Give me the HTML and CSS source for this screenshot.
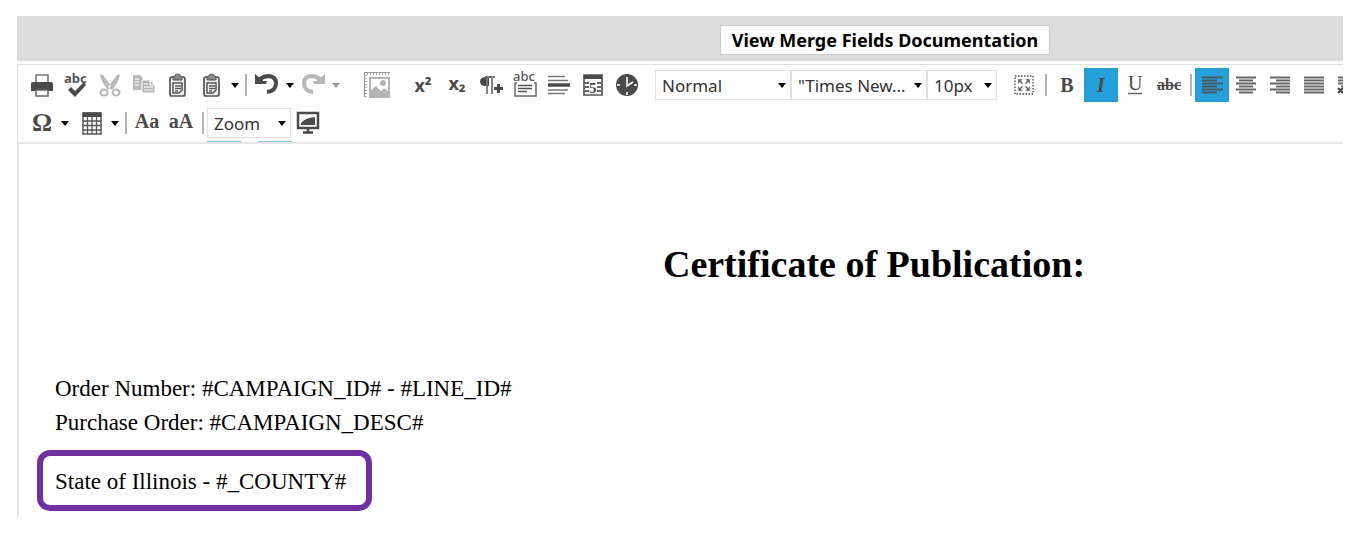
FILE: index.html
```html
<!DOCTYPE html>
<html lang="en">
<head>
<meta charset="utf-8">
<title>Template Editor</title>
<link rel="stylesheet" href="styles.css">
</head>
<body>
<main class="app">
  <header class="topbar"><button class="docs" type="button">View Merge Fields Documentation</button></header>
  <section class="editor">
    <div class="toolbar" role="toolbar" aria-label="Formatting">
      <div class="row">
        <button class="tool" aria-label="Print"><svg viewBox="0 0 24 24"><path d="M6 10V2h12v8" fill="none" stroke="#777" stroke-width="1.6"/><path d="M3 9h18q2 0 2 2v7H1v-7q0-2 2-2z" fill="#4a4a4a"/><path d="M6 17h12v6H6z" fill="#fff" stroke="#666" stroke-width="1.5"/></svg></button>
        <button class="tool" aria-label="Spell check"><svg viewBox="0 0 24 24"><text class="abc" x="0" y="10">abc</text><path d="M4 17l3-3 4 4 9-9 2 3-11 12z" fill="#4a4a4a"/></svg></button>
        <button class="tool" aria-label="Cut" disabled><svg viewBox="0 0 24 24"><path d="M2 2q2-1 3 0l8 11-3 4Q4 10 2 2zM22 2q-2-1-3 0l-9 12 4 3Q20 10 22 2z" fill="#b8b8b8"/><ellipse cx="6" cy="19.500" rx="3.500" ry="3" fill="none" stroke="#b8b8b8" stroke-width="2"/><ellipse cx="18" cy="19.500" rx="3.500" ry="3" fill="none" stroke="#b8b8b8" stroke-width="2"/></svg></button>
        <button class="tool" aria-label="Copy" disabled><svg viewBox="0 0 24 24"><path d="M1 2h7l3 3v12H1z" fill="#bbb"/><path d="M3 6h4M3 9h4M3 12h4" stroke="#fff"/><path d="M10 7h8l5 5v8H10z" fill="#b5b5b5" stroke="#fff"/><path d="M18 7v5h5M12 11h4M12 14h9M12 17h9" fill="none" stroke="#fff"/></svg></button>
        <button class="tool" aria-label="Paste"><svg viewBox="0 0 24 24"><rect x="4" y="4" width="15" height="19" rx="2" fill="#eee" stroke="#555" stroke-width="1.7"/><path d="M7 7V4q0-1 2-1 0-2 2.500-2T14 3q2 0 2 1v3z" fill="#888" stroke="#555"/><path d="M7 10h9v7l-3 3H7z" fill="#fff" stroke="#555" stroke-width="1.500"/><path d="M9 13h6M9 15.500h6M9 18h3" stroke="#555" stroke-width="1.300"/></svg></button>
        <button class="tool" aria-label="Paste options"><svg viewBox="0 0 24 24"><rect x="4" y="4" width="15" height="19" rx="2" fill="#eee" stroke="#555" stroke-width="1.7"/><path d="M7 7V4q0-1 2-1 0-2 2.500-2T14 3q2 0 2 1v3z" fill="#888" stroke="#555"/><path d="M7 10h9v7l-3 3H7z" fill="#fff" stroke="#555" stroke-width="1.500"/><path d="M9 13h6M9 15.500h6M9 18h3" stroke="#555" stroke-width="1.300"/></svg></button>
        <button class="more" aria-label="More paste options"></button>
        <span class="sep"></span>
        <button class="tool" aria-label="Undo"><svg viewBox="0 0 24 24"><path d="M5 6q4-3 9-3 7 1 7 7 0 8-9 9" fill="none" stroke="#4a4a4a" stroke-width="4"/><path d="M0 1l5 4 2-1 1 4 4 0-1 3-11 0z" fill="#4a4a4a"/></svg></button>
        <button class="more" aria-label="Undo history"></button>
        <button class="tool" aria-label="Redo" disabled><svg viewBox="0 0 24 24"><path d="M19 6q-4-3-9-3-7 1-7 7 0 8 9 9" fill="none" stroke="#b8b8b8" stroke-width="4"/><path d="M24 1l-5 4-2-1-1 4-4 0 1 3 11 0z" fill="#b8b8b8"/></svg></button>
        <button class="more off" aria-label="Redo history" disabled></button>
        <button class="tool image" aria-label="Insert image" disabled><svg class="big" viewBox="0 0 28 28"><path d="M3 26V3h24" fill="none" stroke="#aaa" stroke-dasharray="1 2" stroke-width="2"/><path d="M1.500 26V1.500H27" fill="none" stroke="#999"/><path d="M7 7h19v19H7z" fill="#fff" stroke="#b5b5b5" stroke-width="2"/><circle cx="20" cy="12" r="3" fill="#b5b5b5"/><path d="M7 26v-6l6-5 5 5 3-3 5 4v5z" fill="#b5b5b5"/></svg></button>
        <button class="tool script" aria-label="Superscript"><span>x²</span></button>
        <button class="tool script sub" aria-label="Subscript"><span>x₂</span></button>
        <button class="tool" aria-label="New paragraph"><svg viewBox="0 0 24 24"><path d="M10 4H7Q1 4 1 8.500T7 13h3z" fill="#4a4a4a"/><path d="M8 4v17M13 4v17M6 4h10" fill="none" stroke="#777" stroke-width="1.800"/><path d="M19.500 11v9M15 15.500h9" stroke="#4a4a4a" stroke-width="3"/></svg></button>
        <button class="tool" aria-label="Group box"><svg viewBox="0 0 24 24"><text class="abc thin" x="0" y="8">abc</text><path d="M4 10H2v13h21V10h-2" fill="none" stroke="#666" stroke-width="1.500"/><path d="M5 12.500h14M5 15.500h14M5 18.500h9" stroke="#555" stroke-width="1.500"/></svg></button>
        <button class="tool" aria-label="Horizontal rule"><svg viewBox="0 0 24 24"><path d="M1 3.500h17M1 7.500h20M1 17h20M1 20.500h17" stroke="#777" stroke-width="1.700"/><path d="M1 12h22" stroke="#4a4a4a" stroke-width="3.500"/></svg></button>
        <button class="tool" aria-label="Insert date"><svg viewBox="0 0 24 24"><path d="M3 2h18v20H3z" fill="#fff" stroke="#555" stroke-width="1.700"/><path d="M3 2h18v4H3z" fill="#4a4a4a"/><path d="M4 10h4M16 10h4M4 14h4M16 14h4M4 18h4M16 18h4" stroke="#666" stroke-width="2"/><text class="five" x="8" y="20">5</text></svg></button>
        <button class="tool" aria-label="Insert time"><svg viewBox="0 0 24 24"><circle cx="12" cy="12" r="11" fill="#4a4a4a"/><path d="M12 4v9l6-4M2 12h3M19 12h3M12 19v3" fill="none" stroke="#fff" stroke-width="1.600"/></svg></button>
        <label class="pick style"><select aria-label="Paragraph style"><option>Normal</option></select></label>
        <label class="pick font"><select aria-label="Font name"><option>"Times New...</option></select></label>
        <label class="pick size"><select aria-label="Font size"><option>10px</option></select></label>
        <button class="tool full" aria-label="Full screen"><svg viewBox="0 0 24 24"><path d="M3 3h18v18H3z" fill="none" stroke="#444" stroke-width="1.300" stroke-dasharray="1.500 1.500"/><path d="M6 11V6h5zM13 6h5v5zM6 13v5h5zM18 13v5h-5z" fill="#888"/><path d="M7 7l3.500 3.500M17 7l-3.500 3.500M7 17l3.500-3.500M17 17l-3.500-3.500" stroke="#666" stroke-width="1.500"/></svg></button>
        <span class="sep"></span>
        <button class="tool serif" aria-label="Bold">B</button>
        <button class="tool serif on" aria-label="Italic" aria-pressed="true"><i>I</i></button>
        <button class="tool serif" aria-label="Underline"><svg viewBox="0 0 24 24"><text class="u" x="5" y="17">U</text><path d="M5 20.500h14" stroke="#666" stroke-width="1.500"/></svg></button>
        <button class="tool serif strike" aria-label="Strikethrough"><s>abc</s></button>
        <span class="sep"></span>
        <button class="tool on" aria-label="Align left" aria-pressed="true"><svg viewBox="0 0 24 24"><path d="M2 4.500h21M2 10.500h21M2 16.500h21M2 7.500h15M2 13.500h15M2 19.500h15" stroke="#4a5a64" stroke-width="1.800"/></svg></button>
        <button class="tool" aria-label="Align center"><svg viewBox="0 0 24 24"><path d="M2 4.500h20M2 10.500h20M2 16.500h20M5 7.500h14M5 13.500h14M5 19.500h14" stroke="#666" stroke-width="2"/></svg></button>
        <button class="tool" aria-label="Align right"><svg viewBox="0 0 24 24"><path d="M2 4.500h20M2 10.500h20M2 16.500h20M8 7.500h14M8 13.500h14M8 19.500h14" stroke="#666" stroke-width="2"/></svg></button>
        <button class="tool" aria-label="Justify"><svg viewBox="0 0 24 24"><path d="M2 4.500h20M2 7.500h20M2 10.500h20M2 13.500h20M2 16.500h20M2 19.500h20" stroke="#666" stroke-width="2"/></svg></button>
        <button class="tool" aria-label="Remove alignment"><svg viewBox="0 0 24 24"><path d="M2 4.500h20M2 7.500h20M2 10.500h20M5 13.500h17" stroke="#666" stroke-width="2"/><path d="M2 20l5-5M2 15l5 5" stroke="#444" stroke-width="2"/></svg></button>
      </div>
      <div class="row">
        <button class="tool serif omega" aria-label="Insert symbol">Ω</button>
        <button class="more" aria-label="More symbols"></button>
        <button class="tool table" aria-label="Insert table"><svg viewBox="0 0 24 24"><path d="M3 2h18v21H3z" fill="#fff" stroke="#555" stroke-width="1.500"/><path d="M2.500 1.500h19V6h-19z" fill="#4a4a4a"/><path d="M3 10h18M3 14.500h18M3 19h18M7.500 6v17M12 6v17M16.500 6v17" stroke="#555" stroke-width="1.300"/></svg></button>
        <button class="more" aria-label="Table options"></button>
        <span class="sep"></span>
        <button class="tool serif case" aria-label="Lower case">Aa</button>
        <button class="tool serif case" aria-label="Upper case">aA</button>
        <span class="sep"></span>
        <label class="pick zoom"><select aria-label="Zoom"><option>Zoom</option></select></label>
        <button class="tool" aria-label="Preview"><svg viewBox="0 0 24 24"><path d="M2 2h20v15H2z" fill="#fff" stroke="#4a4a4a" stroke-width="2.500"/><path d="M5 14v-2q4-5 14-6v8z" fill="#4a4a4a"/><path d="M12 18v3M7 21.500h10" stroke="#4a4a4a" stroke-width="2.500"/></svg></button>
      </div>
      <div class="clipped"><span></span><span></span></div>
    </div>
    <div class="canvas">
      <article class="page">
        <h1>Certificate of Publication:</h1>
        <p>Order Number: #CAMPAIGN_ID# - #LINE_ID#</p>
        <p>Purchase Order: #CAMPAIGN_DESC#</p>
        <p class="marked">State of Illinois - #_COUNTY#</p>
      </article>
    </div>
  </section>
</main>
</body>
</html>
```

FILE: styles.css
```css
* { box-sizing: border-box; }
body { margin: 0; background: #fff; font-family: "Noto Sans", sans-serif; }
.app { margin: 16px 12px 0 17px; }
.topbar { display: flex; justify-content: center; align-items: center; height: 45px; padding: 2px 0 0 410px; background: #dcdcdc; }
.docs { height: 30px; padding: 0 11px; border: 1px solid #ccc; background: #fff; color: #000; font: bold 18px/28px "Noto Sans", sans-serif; white-space: nowrap; }
.editor { margin-top: 3px; border-top: 1px solid #e0e0e0; }
.toolbar { overflow: hidden; padding: 3px 0 0 7px; border-left: 1px solid #e0e0e0; border-bottom: 2px solid #e8e8e8; }
.row { display: flex; align-items: center; height: 34px; }
.row + .row { margin-top: 4px; }
.tool { display: flex; flex: none; align-items: center; justify-content: center; width: 34px; height: 34px; padding: 0; border: 0; background: none; color: #4a4a4a; }
.tool svg { width: 24px; height: 24px; overflow: visible; }
.tool .big { width: 28px; height: 28px; }
.on { background: #26a0da; border: 1px solid #2a98cf; }
.more { flex: none; width: 12px; height: 34px; padding: 0; border: 0; background: none; }
.more::before { content: ""; display: block; width: 0; margin: 0 auto; border: 4px solid transparent; border-top: 5px solid #000; border-bottom: 0; }
.off::before { border-top-color: #999; }
.sep { flex: none; width: 2px; height: 22px; margin: 0 3px 0 4px; background: #b4b4b4; }
.image { margin: 0 12px 0 18px; }
.full { margin-left: 10px; }
.script { font: bold 18px "Noto Sans", sans-serif; }
.sub { padding-bottom: 4px; }
.serif { font: bold 20px "Liberation Serif", serif; }
.strike { font-size: 16px; }
.omega { font-size: 25px; }
.table { margin-left: 4px; }
.case { padding-bottom: 4px; }
.abc { font: bold 13px "Noto Sans", sans-serif; fill: #555; }
.abc.thin { font-weight: 500; }
.five { font: bold 15px "Liberation Serif", serif; fill: #4a4a4a; }
.u { font: 20px "Liberation Serif", serif; fill: #4a4a4a; }
.pick { position: relative; flex: none; height: 30px; }
.pick::after { content: ""; position: absolute; top: 13px; right: 5px; border: 4px solid transparent; border-top: 5px solid #000; border-bottom: 0; pointer-events: none; }
.pick select { appearance: none; width: 100%; height: 30px; padding: 0 0 0 6px; border: 1px solid #e0e0e0; border-radius: 0; background: #fff; color: #333; font: 17px "Noto Sans", sans-serif; }
.style { width: 136px; margin-left: 11px; }
.font { width: 136px; }
.size { width: 70px; }
.zoom { width: 84px; }
.clipped { display: flex; gap: 17px; height: 1px; margin-top: 1px; padding-left: 182px; }
.clipped span { width: 34px; background: #7fc4e4; }
.canvas { overflow: hidden; border-left: 2px solid #e4e4e4; }
.page { width: calc(100% + 350px); padding: 98px 0 6px 36px; color: #000; font: 23px/34px "Liberation Serif", serif; }
.page h1 { margin: 0 0 86px; font-size: 38px; line-height: 44px; text-align: center; }
.page p { margin: 0; }
.page .marked { width: fit-content; margin: 10px 0 0 -18px; padding: 9px 20px 6px 12px; border: 6px solid #7030a0; border-radius: 13px; }
```
